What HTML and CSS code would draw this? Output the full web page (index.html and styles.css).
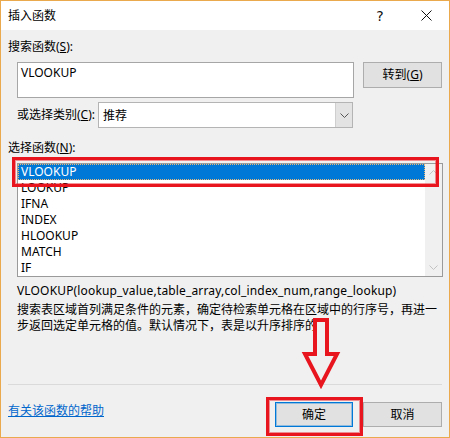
FILE: index.html
```html
<!DOCTYPE html>
<html lang="zh-CN">
<head>
<meta charset="utf-8">
<title>插入函数</title>
<link rel="stylesheet" href="styles.css">
</head>
<body>
<div class="window">
  <div class="titlebar">
    <span class="title">插入函数</span>
    <div class="title-btns">
      <span class="tbtn help">?</span>
      <span class="tbtn close">
        <svg width="11" height="11" viewBox="0 0 11 11"><path d="M0.5 0.5 L10.5 10.5 M10.5 0.5 L0.5 10.5" stroke="#111" stroke-width="1" fill="none"/></svg>
      </span>
    </div>
  </div>
  <div class="body">
    <div class="label">搜索函数(<u>S</u>):</div>
    <div class="search-row">
      <div class="textbox">VLOOKUP</div>
      <div class="btn">转到(<u>G</u>)</div>
    </div>
    <div class="cat-row">
      <span class="cat-label">或选择类别(<u>C</u>):</span>
      <div class="select">
        <span class="select-text">推荐</span>
        <span class="select-arrow">
          <svg width="9" height="5" viewBox="0 0 9 5"><path d="M0.5 0.5 L4.5 4.5 L8.5 0.5" stroke="#555" stroke-width="1" fill="none"/></svg>
        </span>
      </div>
    </div>
    <div class="label label-list">选择函数(<u>N</u>):</div>
    <div class="listbox">
      <ul class="items">
        <li class="item selected">VLOOKUP</li>
        <li class="item">LOOKUP</li>
        <li class="item">IFNA</li>
        <li class="item">INDEX</li>
        <li class="item">HLOOKUP</li>
        <li class="item">MATCH</li>
        <li class="item">IF</li>
      </ul>
      <div class="scrollbar">
        <svg width="9" height="5" viewBox="0 0 9 5"><path d="M0.5 4.5 L4.5 0.5 L8.5 4.5" stroke="#c2c2c2" stroke-width="1" fill="none"/></svg>
        <svg width="9" height="5" viewBox="0 0 9 5"><path d="M0.5 0.5 L4.5 4.5 L8.5 0.5" stroke="#c2c2c2" stroke-width="1" fill="none"/></svg>
      </div>
    </div>
    <div class="signature">VLOOKUP(lookup_value,table_array,col_index_num,range_lookup)</div>
    <div class="desc">搜索表区域首列满足条件的元素，确定待检索单元格在区域中的行序号，再进一步返回选定单元格的值。默认情况下，表是以升序排序的。</div>
    <div class="separator"></div>
    <div class="footer">
      <a class="help-link" href="#">有关该函数的帮助</a>
      <div class="footer-btns">
        <div class="btn btn-ok">确定</div>
        <div class="btn btn-cancel">取消</div>
      </div>
    </div>
  </div>

  <div class="mark mark-list"></div>
  <div class="mark mark-ok"></div>
  <svg class="arrow" width="42" height="79" viewBox="0 0 42 79">
    <polygon points="15,6 27,6 27,40 37,40 21,71 5,40 15,40" fill="#f0f0f0" stroke="#e8141e" stroke-width="4" stroke-linejoin="miter"/>
  </svg>
</div>
</body>
</html>
```

FILE: styles.css
```css
* { box-sizing: border-box; }
html, body { margin: 0; padding: 0; }
body {
  font-family: "Noto Sans", "Noto Sans CJK SC", sans-serif;
  font-size: 12px;
  color: #000;
  background: #fff;
}
.window {
  position: relative;
  width: 450px;
  height: 438px;
  border: 1px solid #e9a94c;
  display: flex;
  flex-direction: column;
  background: #f0f0f0;
}
.titlebar {
  height: 29px;
  background: #fff;
  display: flex;
  align-items: center;
  padding-left: 7px;
  flex: none;
}
.title { line-height: 16px; }
.title-btns {
  margin-left: auto;
  display: flex;
  height: 29px;
}
.tbtn {
  width: 46px;
  height: 29px;
  display: flex;
  align-items: center;
  justify-content: center;
}
.help {
  font-family: "DejaVu Sans", sans-serif;
  font-size: 14px;
  color: #111;
  padding-top: 1px;
}
.close svg { display: block; }
.body {
  flex: 1;
  display: flex;
  flex-direction: column;
  padding: 0 7px 10px 7px;
}
.label { margin-top: 9px; line-height: 16px; }
.label-list { margin-top: 12px; }
.search-row {
  margin-top: 7px;
  margin-left: 9px;
  display: flex;
  gap: 9px;
  align-items: flex-start;
}
.textbox {
  width: 337px;
  height: 36px;
  background: #fff;
  border: 1px solid #a6a6a6;
  padding: 2px 3px;
  line-height: 16px;
}
.btn {
  height: 26px;
  width: 79px;
  background: #e1e1e1;
  border: 1px solid #adadad;
  display: flex;
  align-items: center;
  justify-content: center;
  line-height: 16px;
}
.cat-row {
  margin-top: 4px;
  margin-left: 9px;
  display: flex;
  align-items: center;
}
.cat-label { width: 81px; line-height: 16px; }
.select {
  width: 255px;
  height: 26px;
  background: #fff;
  border: 1px solid #b4b4b4;
  display: flex;
  align-items: stretch;
}
.select-text {
  flex: 1;
  padding-left: 4px;
  display: flex;
  align-items: center;
}
.select-arrow {
  width: 17px;
  background: #e3e3e3;
  border-left: 1px solid #cfcfcf;
  display: flex;
  align-items: center;
  justify-content: center;
}
.select-arrow svg { display: block; }
.listbox {
  margin-top: 7px;
  margin-left: 9px;
  width: 426px;
  height: 114px;
  background: #fff;
  border: 1px solid #9a9a9a;
  display: flex;
}
.items {
  list-style: none;
  margin: 0;
  padding: 0;
  flex: 1;
}
.item {
  height: 16px;
  line-height: 16px;
  padding-left: 3px;
}
.item.selected {
  background: #0078d7;
  color: #fff;
  outline: 1px dotted #e8b77a;
  outline-offset: -1px;
}
.scrollbar {
  width: 17px;
  background: #f0f0f0;
  display: flex;
  flex-direction: column;
  justify-content: space-between;
  align-items: center;
  padding: 6px 0 6px;
}
.scrollbar svg { display: block; }
.signature {
  margin-top: 6px;
  margin-left: 9px;
  line-height: 16px;
  white-space: nowrap;
  letter-spacing: 0.16px;
}
.desc {
  margin-top: 3px;
  margin-left: 9px;
  width: 426px;
  line-height: 16px;
}
.separator {
  margin-top: auto;
  height: 1px;
  background: #dadada;
}
.footer {
  margin-top: 17px;
  display: flex;
  align-items: flex-start;
}
.help-link {
  margin-top: 1px;
  line-height: 16px;
  color: #0066cc;
  text-decoration: underline;
}
.footer-btns {
  margin-left: auto;
  display: flex;
  gap: 10px;
}
.footer-btns .btn { height: 25px; }
.btn-ok {
  width: 78px;
  border-color: #0078d7;
  box-shadow: inset 0 0 0 1px rgba(0, 120, 215, 0.35);
}
.mark {
  position: absolute;
  border: 3px solid #e8141e;
  box-shadow: inset 0 0 0 1px rgba(232, 20, 30, 0.45);
}
.mark-list { left: 11px; top: 156px; width: 427px; height: 30px; }
.mark-ok { left: 265px; top: 396px; width: 97px; height: 39px; }
.arrow { position: absolute; left: 299px; top: 313px; }
```
